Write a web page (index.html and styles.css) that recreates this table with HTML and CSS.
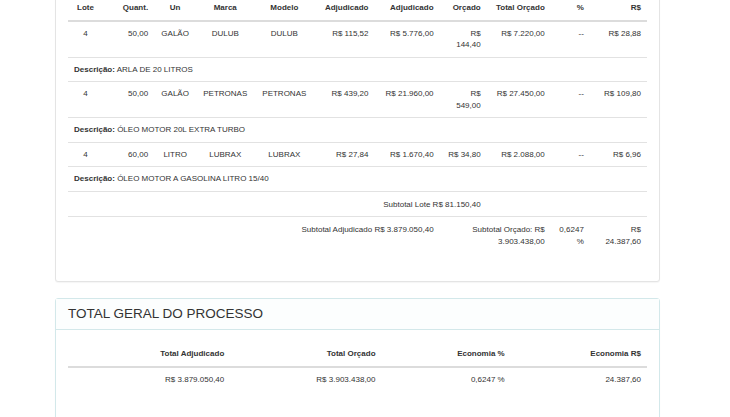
FILE: index.html
```html
<!DOCTYPE html>
<html lang="pt-BR">

<head>
    <meta charset="UTF-8">
    <meta name="viewport" content="width=device-width, initial-scale=1.0">
    <title>Processo - Itens</title>
    <link rel="stylesheet" href="styles.css">
</head>

<body>
    <div class="page">
        <div class="panel panel-itens">
            <div class="panel-body">
                <table class="table itens">
                    <colgroup>
                        <col class="c1"><col class="c2"><col class="c3"><col class="c4"><col class="c5"><col class="c6">
                        <col class="c7"><col class="c8"><col class="c9"><col class="c10"><col class="c11">
                    </colgroup>
                    <thead>
                        <tr class="item">
                            <th>Lote</th>
                            <th>Quant.</th>
                            <th>Un</th>
                            <th>Marca</th>
                            <th>Modelo</th>
                            <th>Adjudicado</th>
                            <th>Adjudicado</th>
                            <th>Orçado</th>
                            <th>Total Orçado</th>
                            <th>%</th>
                            <th>R$</th>
                        </tr>
                    </thead>
                    <tbody>
                        <tr class="item">
                            <td>4</td>
                            <td>50,00</td>
                            <td>GALÃO</td>
                            <td>DULUB</td>
                            <td>DULUB</td>
                            <td>R$ 115,52</td>
                            <td>R$ 5.776,00</td>
                            <td>R$ 144,40</td>
                            <td>R$ 7.220,00</td>
                            <td>--</td>
                            <td>R$ 28,88</td>
                        </tr>
                        <tr class="desc">
                            <td colspan="11"><b>Descrição:</b> ARLA DE 20 LITROS</td>
                        </tr>
                        <tr class="item">
                            <td>4</td>
                            <td>50,00</td>
                            <td>GALÃO</td>
                            <td>PETRONAS</td>
                            <td>PETRONAS</td>
                            <td>R$ 439,20</td>
                            <td>R$ 21.960,00</td>
                            <td>R$ 549,00</td>
                            <td>R$ 27.450,00</td>
                            <td>--</td>
                            <td>R$ 109,80</td>
                        </tr>
                        <tr class="desc">
                            <td colspan="11"><b>Descrição:</b> ÓLEO MOTOR 20L EXTRA TURBO</td>
                        </tr>
                        <tr class="item">
                            <td>4</td>
                            <td>60,00</td>
                            <td>LITRO</td>
                            <td>LUBRAX</td>
                            <td>LUBRAX</td>
                            <td>R$ 27,84</td>
                            <td>R$ 1.670,40</td>
                            <td>R$ 34,80</td>
                            <td>R$ 2.088,00</td>
                            <td>--</td>
                            <td>R$ 6,96</td>
                        </tr>
                        <tr class="desc">
                            <td colspan="11"><b>Descrição:</b> ÓLEO MOTOR A GASOLINA LITRO 15/40</td>
                        </tr>
                        <tr class="subtotal">
                            <td colspan="8">Subtotal Lote R$ 81.150,40</td>
                            <td colspan="3"></td>
                        </tr>
                        <tr class="subtotal">
                            <td colspan="7">Subtotal Adjudicado R$ 3.879.050,40</td>
                            <td colspan="2">Subtotal Orçado: R$ 3.903.438,00</td>
                            <td>0,6247 %</td>
                            <td class="rs">R$ 24.387,60</td>
                        </tr>
                    </tbody>
                </table>
            </div>
        </div>

        <div class="panel panel-total">
            <div class="panel-heading">TOTAL GERAL DO PROCESSO</div>
            <div class="panel-body">
                <table class="table totais">
                    <colgroup>
                        <col class="t1"><col class="t2"><col class="t3"><col class="t4">
                    </colgroup>
                    <thead>
                        <tr>
                            <th>Total Adjudicado</th>
                            <th>Total Orçado</th>
                            <th>Economia %</th>
                            <th>Economia R$</th>
                        </tr>
                    </thead>
                    <tbody>
                        <tr>
                            <td>R$ 3.879.050,40</td>
                            <td>R$ 3.903.438,00</td>
                            <td>0,6247 %</td>
                            <td>24.387,60</td>
                        </tr>
                    </tbody>
                </table>
            </div>
        </div>
    </div>
</body>

</html>
```

FILE: styles.css
```css
body {
    margin: 0;
    background-color: #fff;
    color: #333;
    font-family: "Liberation Sans", Arial, sans-serif;
}

.page {
    width: 605px;
    margin-left: 55px;
    margin-top: -17px;
}

.panel {
    background-color: #fff;
    border: 1px solid #e4e4e4;
    border-radius: 3px;
    box-shadow: 0 1px 1px rgba(0, 0, 0, 0.04);
    margin-bottom: 16px;
}

.panel-total {
    border-color: #d3e8ea;
}

.panel-heading {
    padding: 5px 12px;
    font-size: 13.5px;
    line-height: 20px;
    border-bottom: 1px solid #d3e8ea;
    background-color: #fcfefe;
}

.panel-body {
    padding: 12px;
}

.table {
    width: 100%;
    table-layout: fixed;
    border-collapse: collapse;
    font-size: 8px;
    line-height: 11.5px;
}

.itens {
    margin-bottom: 16px;
}

.totais {
    margin-bottom: 40px;
}

.table th,
.table td {
    padding: 6px;
    vertical-align: top;
}

.table th {
    font-weight: bold;
    border-bottom: 2px solid #dcdcdc;
}

.table td {
    border-top: 1px solid #e2e2e2;
}

/* largura das colunas de itens */
.itens .c1 { width: 35px; }
.itens .c2 { width: 51px; }
.itens .c3 { width: 42px; }
.itens .c4 { width: 58px; }
.itens .c5 { width: 60px; }
.itens .c6 { width: 60px; }
.itens .c7 { width: 65px; }
.itens .c8 { width: 47px; }
.itens .c9 { width: 64px; }
.itens .c10 { width: 39px; }
.itens .c11 { width: 57px; }

.item th,
.item td {
    text-align: right;
}

.item th:nth-child(1),
.item td:nth-child(1),
.item th:nth-child(3),
.item td:nth-child(3),
.item th:nth-child(4),
.item td:nth-child(4),
.item th:nth-child(5),
.item td:nth-child(5) {
    text-align: center;
}

.item th:nth-child(11),
.item td:nth-child(11),
.subtotal .rs {
    padding-left: 8px;
}

.desc td {
    text-align: left;
}

.subtotal td {
    text-align: right;
    padding-top: 7px;
}

/* totais */
.totais .t1 { width: 162px; }
.totais .t2 { width: 151px; }
.totais .t3 { width: 129px; }
.totais .t4 { width: 136px; }

.totais th,
.totais td {
    text-align: right;
}

.totais td {
    border-top: none;
}
```
